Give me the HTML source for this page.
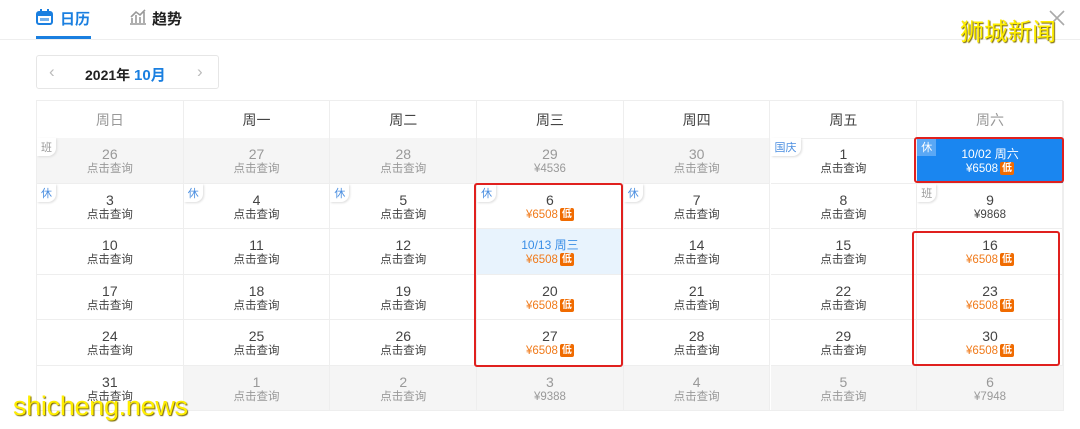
<!DOCTYPE html>
<html><head><meta charset="utf-8"><style>
*{margin:0;padding:0;box-sizing:border-box}
body{width:1080px;height:429px;background:#fff;font-family:"Liberation Sans","Noto Sans CJK SC",sans-serif;position:relative;overflow:hidden;color:#333}
.tabbar{position:absolute;left:0;top:0;width:1080px;height:40px;border-bottom:1px solid #eee}
.tab{position:absolute;top:8px;font-size:15px;font-weight:bold}
.ul{position:absolute;left:36px;top:36px;width:55px;height:3px;background:#1a7fe0}
.nav{position:absolute;left:36px;top:55px;width:183px;height:34px;border:1px solid #e6e6e6;border-radius:3px}
.grid{position:absolute;left:36px;top:100px;width:1027px;height:311px;border:1px solid #eee}
.c{position:absolute;width:147px;height:46px;border-right:1px solid #eee;border-bottom:1px solid #eee;text-align:center}
.h{height:38px;line-height:38px;font-size:14px;color:#444;font-weight:normal}
.n{font-size:14px;margin-top:8px;line-height:16px;color:#444}
.s{font-size:11.5px;line-height:15px;color:#444}
.g{background:#f5f5f5}
.g .n,.g .s{color:#999}
.o{color:#f07a1a}
.low{display:inline-block;background:#f06b00;color:#fff;font-size:10px;line-height:13px;padding:0 2px;border-radius:2px;margin-left:2px;vertical-align:1px;font-weight:bold}
.tg{position:absolute;left:0;top:0;font-size:11px;color:#4a8ee0;background:#fff;padding:1px 4px;border-radius:0 0 8px 0;box-shadow:1px 1px 2px #ddd}
.red{position:absolute;border:2px solid #e0201e;border-radius:3px}
</style></head><body>
<div class="tabbar">
 <svg style="position:absolute;left:36px;top:9px" width="17" height="16" viewBox="0 0 17 16"><rect x="1" y="3" width="15" height="12" rx="2" fill="none" stroke="#1a7fe0" stroke-width="2"/><rect x="1" y="3" width="15" height="4" fill="#1a7fe0"/><rect x="4" y="0" width="2" height="4" fill="#1a7fe0"/><rect x="11" y="0" width="2" height="4" fill="#1a7fe0"/><rect x="4" y="9" width="9" height="3" fill="#1a7fe0" opacity=".6"/></svg>
 <div class="tab" style="left:60px;color:#1a7fe0">日历</div>
 <svg style="position:absolute;left:129px;top:9px" width="18" height="16" viewBox="0 0 18 16"><path d="M1 15h16M3 14V9M7 14V6M11 14V8M15 14V3M2 8l5-5 4 3 5-5" fill="none" stroke="#999" stroke-width="1.6"/></svg>
 <div class="tab" style="left:152px;color:#222">趋势</div>
 <div class="ul"></div>
 <svg style="position:absolute;left:1048px;top:9px" width="18" height="18"><path d="M2 2l14 14M16 2L2 16" stroke="#aaa" stroke-width="1.6"/></svg>
 <div style="position:absolute;left:960px;top:12px;font-size:24px;color:#ffee00;text-shadow:1px 1px 1px #776600">狮城新闻</div>
</div>
<div class="nav">
 <div style="position:absolute;left:12px;top:6px;color:#bbb;font-size:17px">‹</div>
 <div style="position:absolute;left:48px;top:8px;font-size:14px;font-weight:bold;color:#222">2021年 <span style="color:#1a7fe0;font-size:15px">10月</span></div>
 <div style="position:absolute;left:160px;top:6px;color:#bbb;font-size:17px">›</div>
</div>
<div class="grid" id="g"></div>
<div class="red" style="left:474px;top:183px;width:149px;height:184px"></div>
<div class="red" style="left:914px;top:137px;width:150px;height:46px"></div>
<div class="red" style="left:912px;top:231px;width:148px;height:135px"></div>
<div style="position:absolute;left:13px;top:391px;font-size:27px;color:#ffee00;text-shadow:1px 1px 1px #776600;letter-spacing:-0.3px">shicheng.news</div>
<script>
var g=document.getElementById('g'),W=146.7;
var hd=['周日','周一','周二','周三','周四','周五','周六'];
var html='';
hd.forEach(function(t,i){html+='<div class="c h" style="left:'+(i*W)+'px;top:0;width:'+W+'px;color:'+((i==0||i==6)?'#999':'#444')+'">'+t+'</div>'});
var q='点击查询',lo=function(p){return '<span class="o">¥6508</span><span class="low">低</span>'};
var rows=[
[['26',q,'g','班'],['27',q,'g'],['28',q,'g'],['29','¥4536','g'],['30',q,'g'],['1',q,'','国庆'],['sel']],
[['3',q,'','休'],['4',q,'','休'],['5',q,'','休'],['6','L','','休'],['7',q,'','休'],['8',q],['9','¥9868','','班']],
[['10',q],['11',q],['12',q],['sel2'],['14',q],['15',q],['16','L']],
[['17',q],['18',q],['19',q],['20','L'],['21',q],['22',q],['23','L']],
[['24',q],['25',q],['26',q],['27','L'],['28',q],['29',q],['30','L']],
[['31',q],['1',q,'g'],['2',q,'g'],['3','¥9388','g'],['4',q,'g'],['5',q,'g'],['6','¥7948','g']]];
rows.forEach(function(r,ri){r.forEach(function(c,ci){
 var st='left:'+(ci*W)+'px;top:'+(37+ri*45.5)+'px;width:'+W+'px;height:45.5px;';
 if(c[0]=='sel'){html+='<div class="c" style="'+st+'background:#1a86f0;color:#fff"><div class="tg" style="background:#5aa8f5;color:#fff;box-shadow:none;border-radius:0">休</div><div class="n" style="color:#fff;font-size:12px">10/02 周六</div><div class="s" style="color:#fff">¥6508<span class="low">低</span></div></div>';return}
 if(c[0]=='sel2'){html+='<div class="c" style="'+st+'background:#e8f3fd"><div class="n" style="color:#3a8ee6;font-size:12px">10/13 周三</div><div class="s">'+lo()+'</div></div>';return}
 var sub=c[1]=='L'?lo():c[1];
 html+='<div class="c '+(c[2]||'')+'" style="'+st+'">'+(c[3]?'<div class="tg"'+(c[3]=='班'?' style="color:#999"':'')+'>'+c[3]+'</div>':'')+'<div class="n">'+c[0]+'</div><div class="s">'+sub+'</div></div>';
})});
g.innerHTML=html;
</script>
</body></html>
